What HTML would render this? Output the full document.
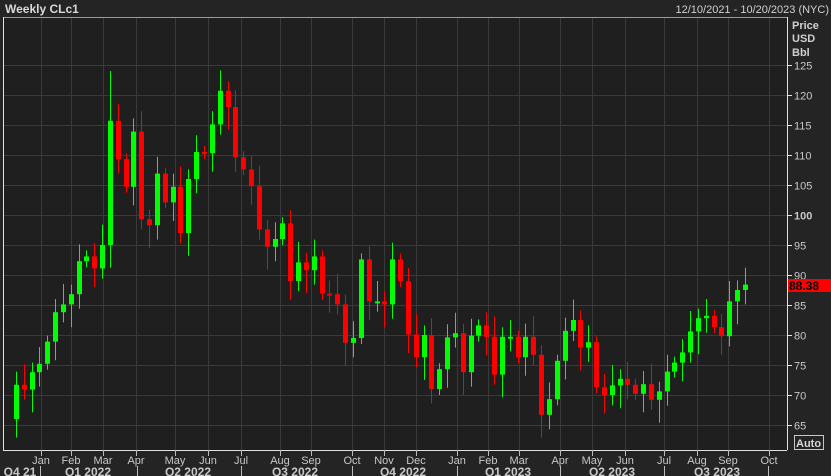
<!DOCTYPE html>
<html><head><meta charset="utf-8"><style>
html,body{margin:0;padding:0;background:#232323;width:831px;height:476px;overflow:hidden;font-family:"Liberation Sans",sans-serif}
</style></head><body>
<svg id="s" width="831" height="476" xmlns="http://www.w3.org/2000/svg" style="display:block">
<rect width="831" height="476" fill="#242424"/>
<rect x="3" y="17" width="784" height="433" fill="#1f1f1f"/>
<g id="grid" stroke="#3a3a3a" stroke-width="1"></g>
<g id="c"></g>
<line x1="3" y1="450.5" x2="787" y2="450.5" stroke="#e0e0e0"/>
<line x1="787.5" y1="17" x2="787.5" y2="450" stroke="#e0e0e0"/>
<line x1="3" y1="17.5" x2="787" y2="17.5" stroke="#9a9a9a"/>
<line x1="3.5" y1="17" x2="3.5" y2="450" stroke="#e0e0e0"/>
<g font-size="12" fill="#d0d0d0">
<text x="5" y="13" font-weight="bold" font-size="12" fill="#d8d8d8">Weekly CLc1</text>
<text x="829" y="13" text-anchor="end" font-size="11">12/10/2021 - 10/20/2023 (NYC)</text>
<text x="792" y="29" font-weight="bold" font-size="11">Price</text>
<text x="792" y="42" font-weight="bold" font-size="11">USD</text>
<text x="792" y="56" font-weight="bold" font-size="11">Bbl</text>
</g>
<g id="ax" font-size="11" fill="#c8c8c8"></g>
<rect x="788" y="279" width="43" height="13" fill="#ff0000"/>
<text x="789" y="290" font-size="12" font-weight="bold" fill="#000">88.38</text>
<rect x="794.5" y="435.5" width="29" height="14" fill="none" stroke="#c8c8c8"/>
<text x="796" y="447" font-size="11" font-weight="bold" fill="#d8d8d8">Auto</text>
</svg>
<script>
var NS="http://www.w3.org/2000/svg";
function el(p,t,a,txt){var e=document.createElementNS(NS,t);for(var k in a)e.setAttribute(k,a[k]);if(txt)e.textContent=txt;p.appendChild(e);return e;}
function Y(p){return 425-(p-65)*6;}
var g=document.getElementById('grid'),ax=document.getElementById('ax'),c=document.getElementById('c');
for(var p=65;p<=125;p+=5){var y=Y(p)+0.5;el(g,'line',{x1:3,y1:y,x2:787,y2:y});el(ax,'line',{x1:787,y1:y,x2:792,y2:y,stroke:'#e0e0e0'});el(ax,'text',{x:794,y:y+4,'font-weight':p==100?'bold':'normal'},''+p);}
var months=[[41,'Jan'],[71,'Feb'],[103,'Mar'],[136,'Apr'],[175,'May'],[208,'Jun'],[241,'Jul'],[280,'Aug'],[311,'Sep'],[352,'Oct'],[384,'Nov'],[416,'Dec'],[457,'Jan'],[488,'Feb'],[519,'Mar'],[560,'Apr'],[592,'May'],[625,'Jun'],[664,'Jul'],[697,'Aug'],[728,'Sep'],[769,'Oct']];
months.forEach(function(m){var x=m[0]+0.5;if(x<787)el(g,'line',{x1:x,y1:17,x2:x,y2:450});el(ax,'line',{x1:x,y1:450,x2:x,y2:456,stroke:'#bbb'});el(ax,'text',{x:m[0],y:464,'text-anchor':'middle'},m[1]);});
[[20,'Q4 21'],[88,'Q1 2022'],[188,'Q2 2022'],[295,'Q3 2022'],[403,'Q4 2022'],[508,'Q1 2023'],[612,'Q2 2023'],[717,'Q3 2023']].forEach(function(q){el(ax,'text',{x:q[0],y:476,'text-anchor':'middle','font-weight':'bold','font-size':'12'},q[1]);});
[40,137,241,352,457,560,664,768].forEach(function(x){el(ax,'line',{x1:x+0.5,y1:466,x2:x+0.5,y2:476,stroke:'#bbb'});});
var cl=[66,71.7,70.9,73.8,75.2,78.9,83.8,85.1,86.8,92.3,93.1,91.1,95,115.7,109.3,104.7,113.9,99.3,98.3,106.9,102.1,104.7,97,106,110.5,110.3,115.1,120.7,118.0,109.6,107.6,104.8,97.6,94.7,96,98.6,89.0,92.1,90.8,93.1,86.9,86.8,85.1,78.7,79.5,92.6,85.6,85.6,85.1,92.6,88.96,80.1,76.3,80.0,71.0,74.3,79.6,80.3,73.8,79.9,81.6,79.7,73.4,79.7,79.7,76.3,79.7,76.7,66.7,69.3,75.7,80.7,82.5,77.9,78.8,71.3,70.0,71.6,72.7,71.7,70.2,71.8,69.2,70.6,73.9,75.4,77.1,80.6,82.8,83.2,81.3,79.8,85.6,87.5,88.4];
var n=cl.length,x0=8,dx=(745-8)/(n-1);
for(var i=1;i<n;i++){var o=cl[i-1],C=cl[i],up=C>=o;var h=Math.max(o,C)+1+((i*7)%5)*0.6,l=Math.min(o,C)-1-((i*3)%5)*0.7;
if(i==13)h=124;var x=Math.round(x0+i*dx),col=up?'#00ff00':'#ff0000';
el(c,'line',{x1:x+0.5,y1:Y(h),x2:x+0.5,y2:Y(l),stroke:col});
var t=Y(Math.max(o,C)),b=Y(Math.min(o,C));el(c,'rect',{x:x-2,y:t,width:5,height:Math.max(2,b-t),fill:col});}
</script>
</body></html>
